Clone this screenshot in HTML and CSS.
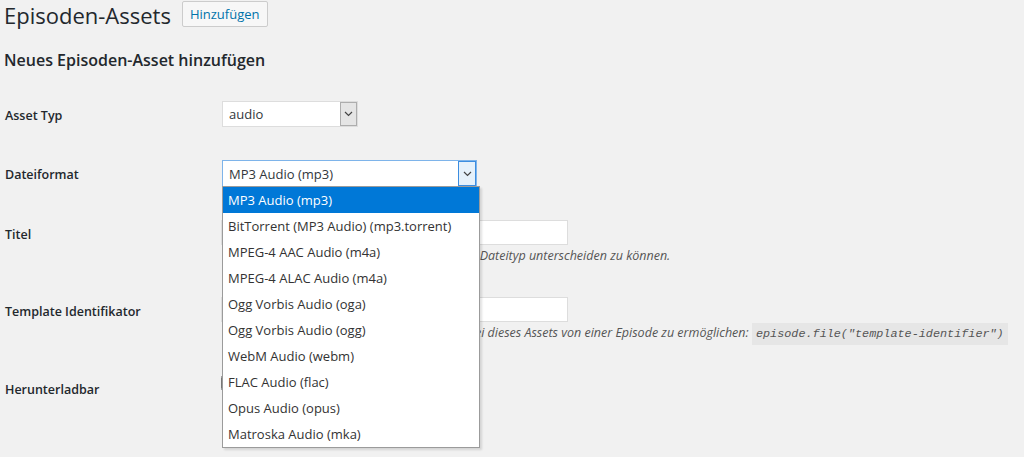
FILE: index.html
```html
<!DOCTYPE html>
<html lang="de">

<head>
    <meta charset="UTF-8">
    <title>Episoden-Assets</title>
    <link rel="stylesheet" href="styles.css">
</head>

<body>
    <div class="wrap">
        <div class="page-title">
            <h1>Episoden-Assets</h1>
            <a class="add-new" href="#">Hinzufügen</a>
        </div>

        <h2>Neues Episoden-Asset hinzufügen</h2>

        <div class="form-table">
            <div class="form-row">
                <label class="row-label">Asset Typ</label>
                <div class="field">
                    <div class="select select-type">
                        <span class="select-value">audio</span>
                        <span class="select-arrow">
                            <svg width="9" height="6" viewBox="0 0 9 6"><path d="M1 1 L4.5 4.5 L8 1" fill="none" stroke="#444" stroke-width="1.2"/></svg>
                        </span>
                    </div>
                </div>
            </div>

            <div class="form-row">
                <label class="row-label">Dateiformat</label>
                <div class="field">
                    <div class="select select-format is-open">
                        <span class="select-value">MP3 Audio (mp3)</span>
                        <span class="select-arrow">
                            <svg width="9" height="6" viewBox="0 0 9 6"><path d="M1 1 L4.5 4.5 L8 1" fill="none" stroke="#444" stroke-width="1.2"/></svg>
                        </span>
                        <ul class="select-menu">
                            <li class="selected">MP3 Audio (mp3)</li>
                            <li>BitTorrent (MP3 Audio) (mp3.torrent)</li>
                            <li>MPEG-4 AAC Audio (m4a)</li>
                            <li>MPEG-4 ALAC Audio (m4a)</li>
                            <li>Ogg Vorbis Audio (oga)</li>
                            <li>Ogg Vorbis Audio (ogg)</li>
                            <li>WebM Audio (webm)</li>
                            <li>FLAC Audio (flac)</li>
                            <li>Opus Audio (opus)</li>
                            <li>Matroska Audio (mka)</li>
                        </ul>
                    </div>
                </div>
            </div>

            <div class="form-row">
                <label class="row-label">Titel</label>
                <div class="field">
                    <input type="text" class="text-input">
                    <p class="description">Bezeichnung, um mehrere Assets mit gleichem Dateityp unterscheiden zu können.</p>
                </div>
            </div>

            <div class="form-row">
                <label class="row-label">Template Identifikator</label>
                <div class="field">
                    <input type="text" class="text-input">
                    <p class="description">Wird benutzt um den Zugriff auf die Dateien bei dieses Assets von einer Episode zu ermöglichen: <code>episode.file("template-identifier")</code></p>
                </div>
            </div>

            <div class="form-row">
                <label class="row-label">Herunterladbar</label>
                <div class="field">
                    <input type="checkbox" class="checkbox">
                </div>
            </div>
        </div>
    </div>
</body>

</html>
```

FILE: styles.css
```css
body {
    margin: 0;
    background-color: #f1f1f1;
    color: #23282d;
    font-family: "Open Sans", "Noto Sans", sans-serif;
    font-size: 13px;
}

.wrap {
    padding: 0 4px 60px;
}

.page-title {
    display: flex;
    align-items: center;
    gap: 11px;
    height: 30px;
}

h1 {
    margin: 0;
    font-size: 22px;
    font-weight: 400;
    line-height: 29px;
}

.add-new {
    display: inline-block;
    margin-top: -2px;
    padding: 0 7px;
    height: 24px;
    line-height: 24px;
    border: 1px solid #ccc;
    border-radius: 2px;
    background-color: #f7f7f7;
    color: #0073aa;
    text-decoration: none;
    font-size: 13px;
}

h2 {
    margin: 20px 0 0;
    font-size: 16px;
    font-weight: 600;
    line-height: 20px;
}

.form-table {
    padding-top: 15px;
}

.form-row {
    display: grid;
    grid-template-columns: 217px 1fr;
    align-items: start;
    padding: 16px 0 17px;
}

.row-label {
    height: 26px;
    padding: 4px 0 0 1px;
    box-sizing: border-box;
    font-size: 12.5px;
    font-weight: 600;
    line-height: 22px;
}

.field {
    position: relative;
}

/* Selects */

.select {
    position: relative;
    display: flex;
    align-items: center;
    height: 26px;
    margin-left: 1px;
    border: 1px solid #ddd;
    background-color: #fff;
    box-sizing: border-box;
}

.select-type {
    width: 136px;
}

.select-format {
    width: 255px;
    height: 27px;
    border-color: #7eb4ea;
}

.select-value {
    flex: 1;
    padding-left: 6px;
    font-size: 13px;
    color: #32373c;
}

.select-arrow {
    display: flex;
    align-items: center;
    justify-content: center;
    width: 15px;
    align-self: stretch;
    background-color: #e5e5e5;
    border: 1px solid #adadad;
}

.select-format .select-arrow {
    width: 16px;
    background-color: #e5f1fb;
    border-color: #3c8de0;
}

.select-menu {
    position: absolute;
    top: 100%;
    left: -1px;
    z-index: 10;
    width: 258px;
    margin: 0;
    padding: 0;
    list-style: none;
    background-color: #fff;
    border: 1px solid #9b9b9b;
    box-shadow: 2px 2px 2px rgba(0, 0, 0, 0.12);
    box-sizing: border-box;
}

.select-menu li {
    height: 26px;
    line-height: 26px;
    padding-left: 5px;
    color: #333;
    font-size: 13px;
}

.select-menu li.selected {
    background-color: #0078d7;
    color: #fff;
}

/* Text fields */

.text-input {
    display: block;
    width: 347px;
    height: 25px;
    margin: 0;
    border: 1px solid #ddd;
    background-color: #fff;
    box-sizing: border-box;
}

.description {
    margin: 3px 0 0 1px;
    font-style: italic;
    font-size: 12.5px;
    line-height: 16px;
    color: #555;
}

code {
    padding: 4px 4px;
    background-color: #e6e6e6;
    font-family: "Liberation Mono", monospace;
    font-style: italic;
    font-size: 11.8px;
    color: #555;
}

.checkbox {
    display: block;
    width: 16px;
    height: 16px;
    margin: 0;
}
```
